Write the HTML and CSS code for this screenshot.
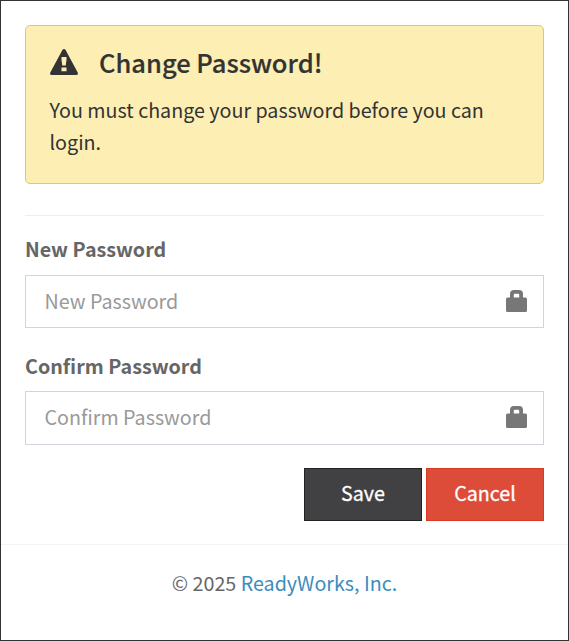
FILE: index.html
```html
<!DOCTYPE html>
<html lang="en">
<head>
    <meta charset="UTF-8">
    <meta name="viewport" content="width=device-width, initial-scale=1.0">
    <title>Change Password</title>
    <link rel="stylesheet" href="styles.css">
</head>
<body>
    <div class="login-box">
        <div class="box-body">
            <div class="alert">
                <h4>
                    <svg class="icon-warning" viewBox="0 0 28 26">
                        <path fill-rule="evenodd" d="M12.4 1Q14-1 15.6 1L27.7 23.6Q28.5 26 26.2 26H1.8Q-.5 26 .3 23.6ZM11.5 8V11L12.3 16.6H15.7L16.5 11V8ZM11.5 18.5V22.2H16.5V18.5Z"/>
                    </svg>
                    <span>Change Password!</span>
                </h4>
                <p>You must change your password before you can login.</p>
            </div>

            <hr>

            <form id="passwordForm">
                <div class="form-group">
                    <label for="newPassword">New Password</label>
                    <div class="input-box">
                        <input type="password" id="newPassword" name="newPassword" placeholder="New Password">
                        <svg class="icon-lock" viewBox="0 0 21 22">
                            <path fill-rule="evenodd" d="M4 7.5V4Q4 0 8 0H13Q17 0 17 4V7.5H19.5Q21 7.5 21 9V20.5Q21 22 19.5 22H1.5Q0 22 0 20.5V9Q0 7.5 1.5 7.5ZM7.8 7.5H13.2V4.7Q13.2 3.7 12.2 3.7H8.8Q7.8 3.7 7.8 4.7Z"/>
                        </svg>
                    </div>
                </div>
                <div class="form-group">
                    <label for="confirmPassword">Confirm Password</label>
                    <div class="input-box input-box-confirm">
                        <input type="password" id="confirmPassword" name="confirmPassword" placeholder="Confirm Password">
                        <svg class="icon-lock" viewBox="0 0 21 22">
                            <path fill-rule="evenodd" d="M4 7.5V4Q4 0 8 0H13Q17 0 17 4V7.5H19.5Q21 7.5 21 9V20.5Q21 22 19.5 22H1.5Q0 22 0 20.5V9Q0 7.5 1.5 7.5ZM7.8 7.5H13.2V4.7Q13.2 3.7 12.2 3.7H8.8Q7.8 3.7 7.8 4.7Z"/>
                        </svg>
                    </div>
                </div>
                <div class="buttons">
                    <button type="submit" class="btn btn-save">Save</button>
                    <button type="button" class="btn btn-cancel">Cancel</button>
                </div>
            </form>
        </div>

        <footer>
            <p>&copy; 2025 <a href="#">ReadyWorks, Inc.</a></p>
        </footer>
    </div>
</body>
</html>
```

FILE: styles.css
```css
* {
    box-sizing: border-box;
}
body {
    font-family: "Noto Sans CJK SC", "Open Sans", sans-serif;
    font-size: 19.7px;
    line-height: 32px;
    color: #666;
    background-color: #fff;
    margin: 0;
}
.login-box {
    height: 641px;
    border: 1px solid #333;
}
.box-body {
    padding: 24px 24px 23px;
}
.alert {
    height: 159px;
    padding: 20px 23.5px;
    background-color: #fdeeb3;
    border: 1px solid #d9cf57;
    border-radius: 5px;
    color: #333;
}
.alert h4 {
    display: flex;
    align-items: center;
    gap: 21.5px;
    height: 32px;
    margin: 0 0 16px;
    font-size: 25.5px;
    font-weight: 500;
    -webkit-text-stroke: 0.2px #333;
}
.alert p {
    margin: 0;
}
.icon-warning {
    width: 28px;
    height: 26px;
    fill: #333;
}
hr {
    height: 1px;
    margin: 31px 0 17px;
    border: 0;
    background-color: #eee;
}
.form-group {
    margin-bottom: 23px;
}
label {
    display: block;
    height: 32px;
    margin-bottom: 10px;
    font-weight: 700;
}
.form-group + .form-group label {
    margin-top: -1px;
    margin-bottom: 9px;
}
.input-box {
    display: flex;
    align-items: center;
    height: 53px;
    padding: 0 16px 2px 18.5px;
    border: 1px solid #d2d3dc;
}
.input-box-confirm {
    height: 54px;
}
.input-box input {
    flex: 1;
    min-width: 0;
    padding: 0;
    border: 0;
    outline: 0;
    background: none;
    font: inherit;
}
.input-box input::placeholder {
    color: #999;
}
.icon-lock {
    width: 21px;
    height: 22px;
    fill: #777;
}
.buttons {
    display: flex;
    justify-content: flex-end;
    gap: 4px;
}
.btn {
    width: 118px;
    height: 53px;
    padding: 0 0 3px;
    border: 1px solid #222;
    font: inherit;
    -webkit-text-stroke: 0.3px #fff;
    color: #fff;
    cursor: pointer;
}
.btn-save {
    background-color: #414042;
}
.btn-cancel {
    background-color: #dd4b39;
    border-color: #d73925;
}
footer {
    padding-top: 22px;
    border-top: 1px solid #f4f4f4;
    text-align: center;
}
footer p {
    margin: 0;
}
footer a {
    color: #3c8dbc;
    text-decoration: none;
}
```
